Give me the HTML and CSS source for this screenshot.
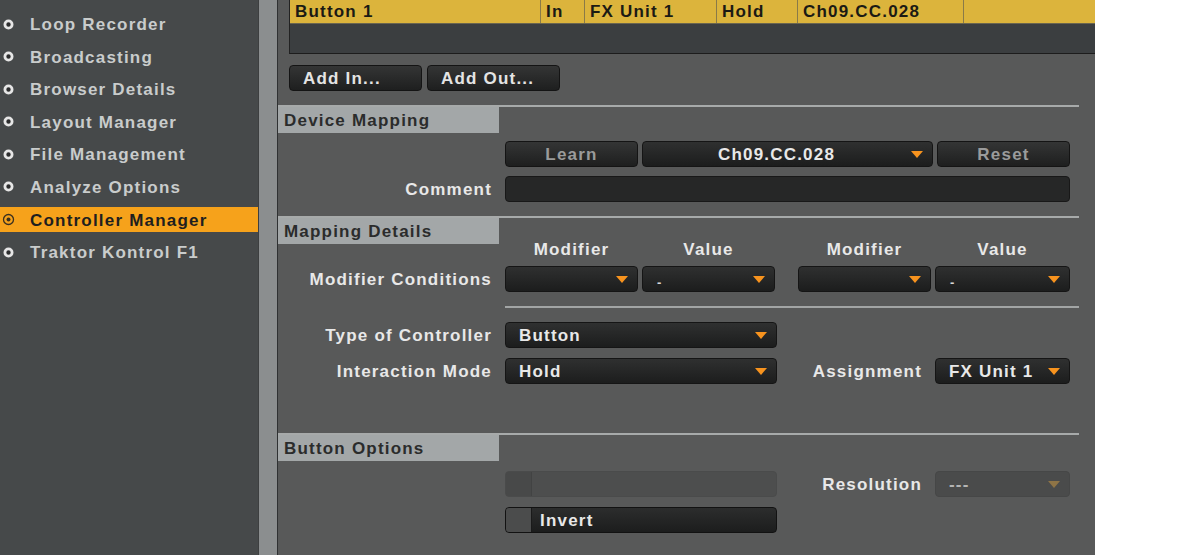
FILE: index.html
```html
<!DOCTYPE html>
<html>
<head>
<meta charset="utf-8">
<link rel="stylesheet" href="styles.css">
</head>
<body>
<div class="app">
  <nav class="sidebar">
    <ul class="nav">
      <li class="nav-item"><svg class="radio" viewBox="0 0 13 13"><circle cx="6.5" cy="6.5" r="3.6" class="ring"/><circle cx="6.5" cy="6.5" r="1.4" class="dot"/></svg><span>Loop Recorder</span></li>
      <li class="nav-item"><svg class="radio" viewBox="0 0 13 13"><circle cx="6.5" cy="6.5" r="3.6" class="ring"/><circle cx="6.5" cy="6.5" r="1.4" class="dot"/></svg><span>Broadcasting</span></li>
      <li class="nav-item"><svg class="radio" viewBox="0 0 13 13"><circle cx="6.5" cy="6.5" r="3.6" class="ring"/><circle cx="6.5" cy="6.5" r="1.4" class="dot"/></svg><span>Browser Details</span></li>
      <li class="nav-item"><svg class="radio" viewBox="0 0 13 13"><circle cx="6.5" cy="6.5" r="3.6" class="ring"/><circle cx="6.5" cy="6.5" r="1.4" class="dot"/></svg><span>Layout Manager</span></li>
      <li class="nav-item"><svg class="radio" viewBox="0 0 13 13"><circle cx="6.5" cy="6.5" r="3.6" class="ring"/><circle cx="6.5" cy="6.5" r="1.4" class="dot"/></svg><span>File Management</span></li>
      <li class="nav-item"><svg class="radio" viewBox="0 0 13 13"><circle cx="6.5" cy="6.5" r="3.6" class="ring"/><circle cx="6.5" cy="6.5" r="1.4" class="dot"/></svg><span>Analyze Options</span></li>
      <li class="nav-item active"><svg class="radio" viewBox="0 0 13 13"><circle cx="6.5" cy="6.5" r="5" class="ring"/><circle cx="6.5" cy="6.5" r="2" class="dot"/></svg><span>Controller Manager</span></li>
      <li class="nav-item"><svg class="radio" viewBox="0 0 13 13"><circle cx="6.5" cy="6.5" r="3.6" class="ring"/><circle cx="6.5" cy="6.5" r="1.4" class="dot"/></svg><span>Traktor Kontrol F1</span></li>
    </ul>
  </nav>
  <div class="strip"></div>
  <main class="panel">
    <div class="table">
      <div class="trow selected">
        <div class="cell c1">Button 1</div>
        <div class="cell c2">In</div>
        <div class="cell c3">FX Unit 1</div>
        <div class="cell c4">Hold</div>
        <div class="cell c5">Ch09.CC.028</div>
        <div class="cell c6"></div>
      </div>
      <div class="tbody"></div>
    </div>

    <div class="add-row">
      <button class="btn add">Add In...</button>
      <button class="btn add">Add Out...</button>
    </div>

    <div class="rule"></div>
    <div class="sec-head">Device Mapping</div>
    <div class="row first">
      <div class="label"></div>
      <div class="controls">
        <button class="btn learn dim">Learn</button>
        <div class="dd centered mapping">Ch09.CC.028<span class="arrow"></span></div>
        <button class="btn learn dim">Reset</button>
      </div>
    </div>
    <div class="row gap9">
      <div class="label">Comment</div>
      <div class="controls"><div class="input"></div></div>
    </div>

    <div class="rule r2"></div>
    <div class="sec-head">Mapping Details</div>
    <div class="colheads">
      <span class="ch w133">Modifier</span>
      <span class="ch w133 g4">Value</span>
      <span class="ch w133 g23">Modifier</span>
      <span class="ch w135 g4">Value</span>
    </div>
    <div class="row mods">
      <div class="label">Modifier Conditions</div>
      <div class="controls">
        <div class="dd w133"><span class="arrow"></span></div>
        <div class="dd w133 g4"><span class="dash">-</span><span class="arrow"></span></div>
        <div class="dd w133 g23"><span class="arrow"></span></div>
        <div class="dd w135 g4"><span class="dash">-</span><span class="arrow"></span></div>
      </div>
    </div>
    <div class="subrule"></div>
    <div class="row gap14">
      <div class="label">Type of Controller</div>
      <div class="controls">
        <div class="dd w272">Button<span class="arrow"></span></div>
      </div>
    </div>
    <div class="row gap10">
      <div class="label">Interaction Mode</div>
      <div class="controls">
        <div class="dd w272">Hold<span class="arrow"></span></div>
        <div class="rlabel">Assignment</div>
        <div class="dd w135">FX Unit 1<span class="arrow"></span></div>
      </div>
    </div>

    <div class="rule r3"></div>
    <div class="sec-head">Button Options</div>
    <div class="row gap10">
      <div class="label"></div>
      <div class="controls">
        <div class="check disabled"><span class="box"></span></div>
        <div class="rlabel">Resolution</div>
        <div class="dd w135 disabled">---<span class="arrow"></span></div>
      </div>
    </div>
    <div class="row gap10">
      <div class="label"></div>
      <div class="controls">
        <div class="check"><span class="box"></span><span class="ctext">Invert</span></div>
      </div>
    </div>
  </main>
  <div class="blank"></div>
</div>
</body>
</html>
```

FILE: styles.css
```css
* { box-sizing: border-box; }
html, body { margin: 0; padding: 0; }
body {
  background: #ffffff;
  font-family: "Liberation Sans", Arial, sans-serif;
  font-weight: bold;
  font-size: 17px;
  letter-spacing: 1.2px;
  overflow: hidden;
}
.app {
  display: flex;
  height: 555px;
  width: 1200px;
}

/* Sidebar */
.sidebar {
  width: 258px;
  flex: none;
  background: #46494a;
}
.nav {
  list-style: none;
  margin: 0;
  padding: 11.5px 0 0 0;
  display: flex;
  flex-direction: column;
  gap: 7.6px;
}
.nav-item {
  height: 25px;
  display: flex;
  align-items: center;
  padding-left: 2px;
  color: #c9cccc;
}
.nav-item span { position: relative; top: 1px; }
.radio {
  width: 13px;
  height: 13px;
  margin-right: 15px;
  flex: none;
}
.radio .ring { fill: #2c2d2e; stroke: #e6e6e6; stroke-width: 2.8; }
.radio .dot { fill: #2c2d2e; }
.nav-item.active {
  background: #f6a21b;
  color: #1f1f1f;
}
.nav-item.active .radio .ring { fill: none; stroke: #3a3020; stroke-width: 1.3; }
.nav-item.active .radio .dot { fill: #3a3020; }

.strip {
  width: 20px;
  flex: none;
  background: #8b8e8f;
  border-left: 1px solid #3d3f40;
  border-right: 1px solid #2f3132;
}

/* Main panel */
.panel {
  width: 817px;
  flex: none;
  background: #585959;
  overflow: hidden;
  display: flex;
  flex-direction: column;
}
.blank { flex: 1; background: #fff; }

.table {
  margin-left: 11px;
  border-left: 1px solid #222;
  border-bottom: 1px solid #1c1c1c;
  flex: none;
}
.trow {
  display: flex;
  height: 24px;
  border-bottom: 1px solid #6a6550;
}
.trow.selected { background: #dcb43c; color: #1b1a14; }
.cell {
  padding-left: 5px;
  line-height: 24px;
  border-right: 1px solid #8a7a48;
  white-space: nowrap;
}
.c1 { width: 251px; }
.c2 { width: 44px; }
.c3 { width: 132px; }
.c4 { width: 81px; }
.c5 { width: 166px; }
.c6 { flex: 1; border-right: none; }
.tbody {
  height: 29px;
  background: #3b3e40;
}

.btn {
  font: inherit;
  letter-spacing: inherit;
  color: #e4e4e4;
  background: linear-gradient(#343535, #1e1f1f);
  border: 1px solid #141414;
  border-radius: 4px;
  height: 26px;
  padding: 1px 0 0 0;
  flex: none;
}
.add-row {
  display: flex;
  gap: 5px;
  margin: 11px 0 0 11px;
}
.btn.add {
  width: 133px;
  text-align: left;
  padding-left: 13px;
}
.btn.learn { width: 133px; text-align: center; }
.btn.dim { color: #9a9b9b; }

.rule {
  height: 2px;
  width: 801px;
  background: #a7aaaa;
  margin-top: 14px;
  flex: none;
}
.rule.r2 { margin-top: 14px; }
.rule.r3 { margin-top: 49px; }
.sec-head {
  width: 221px;
  height: 26px;
  background: #a3a7a8;
  color: #2b2c2c;
  padding-left: 6px;
  line-height: 27px;
  flex: none;
}

.row {
  display: flex;
  align-items: center;
  height: 26px;
  flex: none;
}
.row.first { margin-top: 8px; }
.row.gap9 { margin-top: 9px; }
.row.gap10 { margin-top: 10px; }
.row.gap14 { margin-top: 14px; }
.row.mods { margin-top: 8px; }
.label {
  width: 214px;
  text-align: right;
  color: #e8e8e8;
  margin-right: 13px;
  white-space: nowrap;
  flex: none;
  position: relative;
  top: 1px;
}
.controls {
  display: flex;
  align-items: center;
  width: 565px;
}
.controls .btn + .dd, .controls .dd + .btn { margin-left: 4px; }

.dd {
  position: relative;
  height: 26px;
  background: linear-gradient(#2f3030, #1c1d1d);
  border: 1px solid #151515;
  border-radius: 4px;
  color: #e8e8e8;
  line-height: 25px;
  padding-left: 13px;
  white-space: nowrap;
  flex: none;
}
.dd.mapping { width: 291px; }
.dd.centered { text-align: center; padding-left: 0; padding-right: 22px; }
.arrow {
  position: absolute;
  right: 9px;
  top: 9px;
  width: 0;
  height: 0;
  border-left: 6px solid transparent;
  border-right: 6px solid transparent;
  border-top: 7px solid #f7931e;
}
.dash { font-size: 13px; color: #d8d8d8; position: relative; top: 2px; left: 1px; }
.w133 { width: 133px; }
.w135 { width: 135px; }
.w272 { width: 272px; }
.g4 { margin-left: 4px; }
.g23 { margin-left: 23px; }

.dd.disabled {
  background: #4a4b4b;
  border-color: #464747;
  color: #b4b4b4;
}
.dd.disabled .arrow { border-top-color: #8e7446; }

.colheads {
  display: flex;
  margin: -3px 0 0 227px;
  height: 18px;
  line-height: 18px;
  color: #e8e8e8;
  flex: none;
}
.ch { text-align: center; flex: none; }
.row.mods { margin-top: 7px; }

.subrule {
  margin: 14px 0 0 227px;
  width: 574px;
  height: 2px;
  background: #a2a5a5;
  flex: none;
}

.input {
  width: 565px;
  height: 26px;
  background: #262727;
  border: 1px solid #181818;
  border-radius: 4px;
}

.rlabel {
  width: 158px;
  text-align: right;
  padding-right: 13px;
  color: #e8e8e8;
  white-space: nowrap;
  flex: none;
  position: relative;
  top: 1px;
}

.check {
  width: 272px;
  height: 26px;
  display: flex;
  align-items: center;
  background: linear-gradient(#2c2d2d, #1c1d1d);
  border: 1px solid #121212;
  border-radius: 4px;
  overflow: hidden;
  flex: none;
}
.check .box {
  width: 26px;
  height: 100%;
  background: #4b4c4c;
  border-right: 1px solid #1a1a1a;
  flex: none;
}
.check .ctext {
  margin-left: 8px;
  color: #e8e8e8;
  position: relative;
  top: 1px;
}
.check.disabled {
  background: #4d4e4e;
  border-color: #4a4b4b;
}
.check.disabled .box {
  background: #484949;
  border-right-color: #424343;
}
```
